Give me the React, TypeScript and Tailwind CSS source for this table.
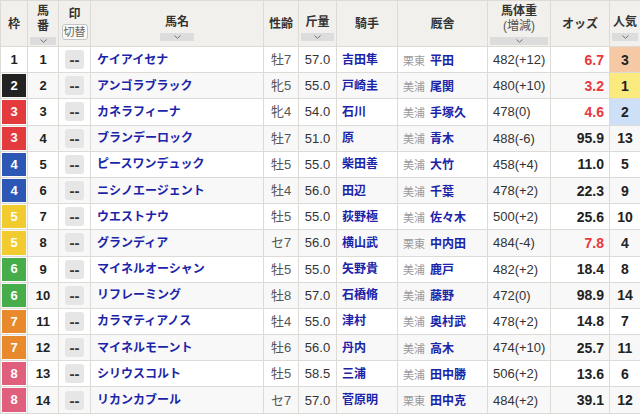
import React from 'react'

type Row = {
  waku: number
  num: number
  name: string
  sex: string
  kin: string
  jockey: string
  area: string
  trainer: string
  weight: string
  odds: string
  pop: number
}

const rows: Row[] = [
  { waku: 1, num: 1, name: 'ケイアイセナ', sex: '牡7', kin: '57.0', jockey: '吉田隼', area: '栗東', trainer: '平田', weight: '482(+12)', odds: '6.7', pop: 3 },
  { waku: 2, num: 2, name: 'アンゴラブラック', sex: '牝5', kin: '55.0', jockey: '戸崎圭', area: '美浦', trainer: '尾関', weight: '480(+10)', odds: '3.2', pop: 1 },
  { waku: 3, num: 3, name: 'カネラフィーナ', sex: '牝4', kin: '54.0', jockey: '石川', area: '美浦', trainer: '手塚久', weight: '478(0)', odds: '4.6', pop: 2 },
  { waku: 3, num: 4, name: 'ブランデーロック', sex: '牡7', kin: '51.0', jockey: '原', area: '美浦', trainer: '青木', weight: '488(-6)', odds: '95.9', pop: 13 },
  { waku: 4, num: 5, name: 'ピースワンデュック', sex: '牡5', kin: '55.0', jockey: '柴田善', area: '美浦', trainer: '大竹', weight: '458(+4)', odds: '11.0', pop: 5 },
  { waku: 4, num: 6, name: 'ニシノエージェント', sex: '牡4', kin: '56.0', jockey: '田辺', area: '美浦', trainer: '千葉', weight: '478(+2)', odds: '22.3', pop: 9 },
  { waku: 5, num: 7, name: 'ウエストナウ', sex: '牡5', kin: '55.0', jockey: '荻野極', area: '美浦', trainer: '佐々木', weight: '500(+2)', odds: '25.6', pop: 10 },
  { waku: 5, num: 8, name: 'グランディア', sex: 'セ7', kin: '56.0', jockey: '横山武', area: '栗東', trainer: '中内田', weight: '484(-4)', odds: '7.8', pop: 4 },
  { waku: 6, num: 9, name: 'マイネルオーシャン', sex: '牡5', kin: '55.0', jockey: '矢野貴', area: '美浦', trainer: '鹿戸', weight: '482(+2)', odds: '18.4', pop: 8 },
  { waku: 6, num: 10, name: 'リフレーミング', sex: '牡8', kin: '57.0', jockey: '石橋脩', area: '美浦', trainer: '藤野', weight: '472(0)', odds: '98.9', pop: 14 },
  { waku: 7, num: 11, name: 'カラマティアノス', sex: '牡4', kin: '55.0', jockey: '津村', area: '美浦', trainer: '奥村武', weight: '478(+2)', odds: '14.8', pop: 7 },
  { waku: 7, num: 12, name: 'マイネルモーント', sex: '牡6', kin: '56.0', jockey: '丹内', area: '美浦', trainer: '高木', weight: '474(+10)', odds: '25.7', pop: 11 },
  { waku: 8, num: 13, name: 'シリウスコルト', sex: '牡5', kin: '58.5', jockey: '三浦', area: '美浦', trainer: '田中勝', weight: '506(+2)', odds: '13.6', pop: 6 },
  { waku: 8, num: 14, name: 'リカンカブール', sex: 'セ7', kin: '57.0', jockey: '菅原明', area: '栗東', trainer: '田中克', weight: '484(+2)', odds: '39.1', pop: 12 },
]

const wakuStyle: { [key: number]: string } = {
  1: 'bg-white text-[#222]',
  2: 'bg-[#222222] text-white',
  3: 'bg-[#e23a3d] text-white',
  4: 'bg-[#2d57b5] text-white',
  5: 'bg-[#f2cb2f] text-white',
  6: 'bg-[#47ad4a] text-white',
  7: 'bg-[#e8892b] text-white',
  8: 'bg-[#df5f7c] text-white',
}

const popStyle: { [key: number]: string } = {
  1: 'bg-[#fbeb7e]',
  2: 'bg-[#cde0f7]',
  3: 'bg-[#f4c9a3]',
}

// ソートバー
const SortBar = ({ wide }: { wide?: boolean }) => (
  <div className={`mt-[3px] h-[8px] bg-[#dcdcdc] flex items-center justify-center ${wide ? 'mx-auto w-[34px]' : 'mx-[2px]'}`}>
    <svg width="7" height="4" viewBox="0 0 7 4">
      <path d="M0.5 0.5 L3.5 3.3 L6.5 0.5" fill="none" stroke="#666" strokeWidth="0.9" />
    </svg>
  </div>
)

const th = 'border border-[#dedbd6] bg-[#f2f0ec] text-[12px] font-bold text-[#333] text-center align-middle p-0 whitespace-nowrap'
const td = 'border border-[#dedbd6] p-0 align-middle'

export default function App() {
  return (
    <div className="w-[640px] h-[415px] bg-white overflow-hidden font-['Liberation_Sans','Noto_Sans_CJK_JP',sans-serif]">
      <table className="table-fixed border-collapse w-[640px]">
        <colgroup>
          <col className="w-[27px]" />
          <col className="w-[31px]" />
          <col className="w-[32px]" />
          <col className="w-[173px]" />
          <col className="w-[35px]" />
          <col className="w-[38px]" />
          <col className="w-[61px]" />
          <col className="w-[90px]" />
          <col className="w-[63px]" />
          <col className="w-[59px]" />
          <col className="w-[31px]" />
        </colgroup>
        <thead>
          <tr className="h-[46px]">
            <th className={th}>枠</th>
            <th className={th}>
              <div className="leading-[15px] pt-[2px]">馬<br />番</div>
              <SortBar />
            </th>
            <th className={th}>
              <div className="leading-[15px]">印</div>
              <div className="mx-auto mt-[2px] w-[26px] h-[16px] border border-[#c4c4c4] rounded-[3px] bg-[#fafafa] text-[11px] font-normal text-[#666] leading-[14px]">切替</div>
            </th>
            <th className={th}>
              <div className="leading-[16px] pt-[8px]">馬名</div>
              <SortBar wide />
            </th>
            <th className={th}>性齢</th>
            <th className={th}>
              <div className="leading-[16px] pt-[8px]">斤量</div>
              <SortBar />
            </th>
            <th className={th}>騎手</th>
            <th className={th}>厩舎</th>
            <th className={th}>
              <div className="leading-[15px] pt-[1px]">馬体重</div>
              <div className="leading-[15px] text-[12px] font-normal text-[#555]">(増減)</div>
              <SortBar />
            </th>
            <th className={th}>オッズ</th>
            <th className={th}>
              <div className="leading-[16px] pt-[8px]">人気</div>
              <SortBar />
            </th>
          </tr>
        </thead>
        <tbody>
          {rows.map((r, i) => {
            const red = parseFloat(r.odds) < 10
            return (
              <tr key={r.num} className={`h-[26.2px] ${i % 2 === 1 ? 'bg-[#f8f8f8]' : 'bg-white'}`}>
                <td className={`${td} px-[1px] py-[1px]`}>
                  <div className={`h-[23.2px] flex items-center justify-center text-[13px] font-bold ${wakuStyle[r.waku]}`}>{r.waku}</div>
                </td>
                <td className={`${td} text-center text-[13px] font-bold text-[#222] leading-none`}>{r.num}</td>
                <td className={td}>
                  <div className="mx-auto w-[19px] h-[19px] rounded-[3px] bg-[#e6e6e6] flex items-center justify-center text-[15px] font-black text-[#333] leading-none">--</div>
                </td>
                <td className={`${td} pl-[6px] text-[12px] font-bold text-[#1b24a8] whitespace-nowrap leading-none`}>{r.name}</td>
                <td className={`${td} text-center text-[13px] text-[#555] leading-none`}>{r.sex}</td>
                <td className={`${td} text-center text-[13px] text-[#333] leading-none`}>{r.kin}</td>
                <td className={`${td} pl-[5px] text-[12px] font-bold text-[#1b24a8] whitespace-nowrap leading-none`}>{r.jockey}</td>
                <td className={`${td} pl-[5px] whitespace-nowrap leading-none`}>
                  <span className="text-[11px] text-[#9a9a9a]">{r.area}</span>
                  <span className="ml-[5px] text-[12px] font-bold text-[#1b24a8]">{r.trainer}</span>
                </td>
                <td className={`${td} pl-[5px] text-[13px] text-[#333] whitespace-nowrap leading-none`}>{r.weight}</td>
                <td className={`${td} pr-[5px] text-right text-[14px] font-bold leading-none ${red ? 'text-[#e8383d]' : 'text-[#222]'}`}>{r.odds}</td>
                <td className={`${td} text-center text-[14px] font-bold text-[#222] leading-none ${popStyle[r.pop] ?? ''}`}>{r.pop}</td>
              </tr>
            )
          })}
        </tbody>
      </table>
    </div>
  )
}
